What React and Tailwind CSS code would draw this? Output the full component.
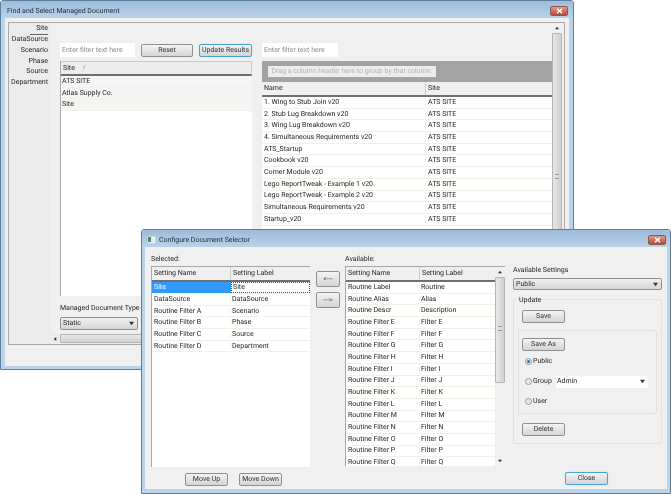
const docs = [
  '1. Wing to Stub Join v20',
  '2. Stub Lug Breakdown v20',
  '3. Wing Lug Breakdown v20',
  '4. Simultaneous Requirements v20',
  'ATS_Startup',
  'Cookbook v20',
  'Corner Module v20',
  'Lego ReportTweak - Example 1 v20',
  'Lego ReportTweak - Example 2 v20',
  'Simultaneous Requirements v20',
  'Startup_v20',
]

const tabs = ['Site', 'DataSource', 'Scenario', 'Phase', 'Source', 'Department']

const selected = [
  ['DataSource', 'DataSource'],
  ['Routine Filter A', 'Scenario'],
  ['Routine Filter B', 'Phase'],
  ['Routine Filter C', 'Source'],
  ['Routine Filter D', 'Department'],
]

const available = [
  ['Routine Label', 'Routine'],
  ['Routine Alias', 'Alias'],
  ['Routine Descr', 'Description'],
  ['Routine Filter E', 'Filter E'],
  ['Routine Filter F', 'Filter F'],
  ['Routine Filter G', 'Filter G'],
  ['Routine Filter H', 'Filter H'],
  ['Routine Filter I', 'Filter I'],
  ['Routine Filter J', 'Filter J'],
  ['Routine Filter K', 'Filter K'],
  ['Routine Filter L', 'Filter L'],
  ['Routine Filter M', 'Filter M'],
  ['Routine Filter N', 'Filter N'],
  ['Routine Filter O', 'Filter O'],
  ['Routine Filter P', 'Filter P'],
  ['Routine Filter Q', 'Filter Q'],
]

const Button = ({ children, className = '', focused }) => (
  <div
    className={`flex items-center justify-center whitespace-nowrap rounded-[2px] border bg-gradient-to-b from-[#f4f4f4] to-[#d4d4d4] text-[#333] ${
      focused ? 'border-[#4aa3d8] shadow-[0_0_1px_#7cc4ea]' : 'border-[#8f8f8f]'
    } ${className}`}
  >
    {children}
  </div>
)

const Arrow = ({ dir = 'down', size = 5, color = '#333' }) => {
  const pts = {
    down: '0,1 6,1 3,5',
    up: '0,5 6,5 3,1',
    left: '5,0 5,6 1,3',
  }
  return (
    <svg width={size} height={size} viewBox="0 0 6 6" className="shrink-0">
      <polygon points={pts[dir]} fill={color} />
    </svg>
  )
}

const CloseBox = ({ className = '' }) => (
  <div className={`flex h-[10px] w-[18px] items-center justify-center rounded-[2px] border border-[#8c5a55] bg-gradient-to-b from-[#dd9a90] to-[#b8493c] ${className}`}>
    <svg width="7" height="6" viewBox="0 0 7 6">
      <path d="M1 0.8 L6 5.2 M6 0.8 L1 5.2" stroke="#fff" strokeWidth="1.5" />
    </svg>
  </div>
)

const Filter = ({ className = '' }) => (
  <div className={`flex h-[14px] items-center bg-white px-[2px] text-[#8d8d8d] ${className}`}>
    Enter filter text here
  </div>
)

const HeaderCell = ({ children, className = '' }) => (
  <div className={`flex h-full items-center border-r border-[#d0d0d0] pl-[2px] ${className}`}>{children}</div>
)

const PairRow = ({ name, label, nameWidth = 'w-[79px]' }) => (
  <div className="flex h-[11.7px] shrink-0 items-center border-b border-[#f2f1e8] bg-white">
    <div className={`shrink-0 truncate border-r border-[#f2f1e8] pl-[2px] ${nameWidth}`}>{name}</div>
    <div className="flex-1 pl-[1px]">{label}</div>
  </div>
)

const VScrollbar = ({ className = '', thumb = 'h-[100px]', grip = 'mt-[44px]' }) => (
  <div className={`flex flex-col items-center bg-[#f0f0f0] ${className}`}>
    <div className="flex h-[10px] shrink-0 items-center"><Arrow dir="up" size={4} /></div>
    <div className={`flex w-full shrink-0 justify-center rounded-[1px] border border-[#b5b5b5] bg-gradient-to-r from-[#e8e8e8] to-[#cfcfcf] ${thumb}`}>
      <div className={`h-[5px] w-[4px] border-y border-[#999] bg-[#ddd] ${grip}`} />
    </div>
    <div className="flex-1" />
    <div className="flex h-[10px] shrink-0 items-center"><Arrow dir="down" size={4} /></div>
  </div>
)

const Radio = ({ on }) => (
  <div className="flex h-[7px] w-[7px] shrink-0 items-center justify-center rounded-full border border-[#9a9a9a] bg-[#e8e8e8]">
    {on && <div className="h-[3px] w-[3px] rounded-full bg-[#1f6fb5]" />}
  </div>
)

const FindWindow = () => (
  <div className="absolute left-0 top-0 flex h-[370px] w-[574px] flex-col rounded-t-[3px] border border-[#5d7f97] bg-[#bcd4ea]">
    <div className="flex h-[17px] shrink-0 items-center justify-between bg-gradient-to-b from-[#9dbcd9] to-[#b9d2ea] pl-[6px] pr-[5px] pt-[3px]">
      <span className="text-[#1b2a38]">Find and Select Managed Document</span>
      <CloseBox />
    </div>
    <div className="mx-[4px] mb-[3px] flex flex-1 flex-col bg-[#f0f0f0] pb-[21px] pl-[3px] pr-[4px] pt-[4px]">
      <div className="flex flex-1 overflow-hidden border border-[#a8a8a8] bg-[#f0f0f0]">
        <div className="flex w-[42px] shrink-0 flex-col items-end bg-[#ececec] pr-[3px]">
          {tabs.map((t, i) => (
            <div key={t} className={`flex h-[10.6px] items-center whitespace-nowrap ${i === 0 ? 'mt-[1px] border-b border-[#666] pl-[6px]' : ''}`}>{t}</div>
          ))}
        </div>
        <div className="flex min-w-0 flex-1 flex-col">
          <div className="flex min-h-0 flex-1">
            <div className="flex w-[203px] shrink-0 flex-col pl-[9px] pt-[20px]">
              <div className="flex h-[14px] items-center">
                <Filter className="w-[75px]" />
                <Button className="ml-[6px] h-[13px] w-[52px]">Reset</Button>
                <Button focused className="ml-[6px] h-[13px] w-[53px]">Update Results</Button>
              </div>
              <div className="mt-[4px] flex w-[192px] flex-1 flex-col border-l border-[#a8a8a8] bg-white">
                <div className="flex h-[15px] items-center border-b-2 border-t border-r border-[#6f6f6f] border-t-[#c9c9c9] border-r-[#c9c9c9] bg-[#ededed] pl-[2px]">
                  Site <span className="ml-[8px] text-[6px] text-[#777]">/</span>
                </div>
                {['ATS SITE', 'Atlas Supply Co.', 'Site'].map((s) => (
                  <div key={s} className="flex h-[11.7px] items-center border-b border-[#f4f2e8] bg-[#f5f5f5] pl-[1px]">{s}</div>
                ))}
              </div>
              <div className="flex h-[37px] shrink-0 flex-col pt-[9px]">
                <div className="whitespace-nowrap">Managed Document Type</div>
                <div className="mt-[5px] flex h-[13px] w-[78px] items-center justify-between rounded-[2px] border border-[#8f8f8f] bg-gradient-to-b from-[#f0f0f0] to-[#d6d6d6] pl-[2px] pr-[3px]">
                  Static <Arrow />
                </div>
              </div>
            </div>
            <div className="flex min-w-0 flex-1 flex-col pl-[8px] pt-[20px]">
              <Filter className="w-[76px] shrink-0" />
              <div className="mt-[4px] flex-1 overflow-hidden bg-white">
                <div className="flex h-[21px] items-start bg-[#a3a3a3] pl-[6px] pt-[5px]">
                  <div className="flex h-[11px] w-[168px] items-center justify-center whitespace-nowrap bg-[#ededed] text-[#b5b5b5]">Drag a column header here to group by that column.</div>
                </div>
                <div className="flex h-[15px] border-b-2 border-[#6f6f6f] bg-[#f0f0f0]">
                  <HeaderCell className="w-[164px] shrink-0">Name</HeaderCell>
                  <div className="flex items-center pl-[2px]">Site</div>
                </div>
                {docs.map((d) => (
                  <div key={d} className="flex h-[11.7px] items-center border-b border-[#f2f1e8]">
                    <div className="w-[164px] shrink-0 border-r border-[#f2f1e8] pl-[2px]">{d}</div>
                    <div className="pl-[2px]">ATS SITE</div>
                  </div>
                ))}
              </div>
            </div>
            <VScrollbar className="mr-[2px] w-[10px] shrink-0" thumb="h-[270px]" grip="mt-[140px]" />
          </div>
          <div className="flex h-[11px] shrink-0 items-center bg-[#ececec] pl-[2px]">
            <Arrow dir="left" size={4} />
            <div className="ml-[3px] h-[9px] w-[400px] rounded-[1px] border border-[#b5b5b5] bg-gradient-to-b from-[#e8e8e8] to-[#cfcfcf]" />
          </div>
        </div>
      </div>
    </div>
  </div>
)

const ConfigHeader = ({ nameWidth = 'w-[79px]' }) => (
  <div className="flex h-[15px] shrink-0 border-b-2 border-[#6f6f6f] bg-[#efefef]">
    <HeaderCell className={`shrink-0 ${nameWidth}`}>Setting Name</HeaderCell>
    <div className="flex items-center pl-[2px]">Setting Label</div>
  </div>
)

const ConfigWindow = () => (
  <div className="absolute left-[141px] top-[229px] flex h-[265px] w-[530px] flex-col rounded-t-[3px] border border-[#5d7f97] bg-[#bcd4ea]">
    <div className="flex h-[17px] shrink-0 items-center bg-gradient-to-b from-[#9dbcd9] to-[#b9d2ea] pl-[5px] pr-[4px] pt-[3px]">
      <svg width="9" height="8" viewBox="0 0 9 8" className="mr-[3px]">
        <rect width="9" height="8" fill="#e8eef2" stroke="#7d8e9a" strokeWidth="0.5" />
        <rect x="1" y="1" width="3" height="5" fill="#3f8a6a" />
      </svg>
      <span className="text-[#1b2a38]">Configure Document Selector</span>
      <CloseBox className="ml-auto" />
    </div>
    <div className="mx-[3px] mb-[4px] flex min-h-0 flex-1 bg-[#f0f0f0] pb-[4px] pl-[6px] pr-[5px]">
      <div className="flex w-[159px] shrink-0 flex-col">
        <div className="flex h-[19px] shrink-0 items-end pb-[3px]">Selected:</div>
        <div className="flex h-[201px] shrink-0 flex-col border-l border-t border-[#a8a8a8] bg-white">
          <ConfigHeader />
          <div className="flex h-[12px] shrink-0 items-center border-b border-[#f2f1e8]">
            <div className="flex h-full w-[79px] shrink-0 items-center bg-[#3399ff] pl-[2px] text-white">Site</div>
            <div className="flex h-full flex-1 items-center border border-dotted border-[#555] pl-[1px]">Site</div>
          </div>
          {selected.map(([n, l]) => <PairRow key={n} name={n} label={l} />)}
        </div>
        <div className="mt-[6px] flex gap-[11px] pl-[34px]">
          <Button className="h-[13px] w-[43px]">Move Up</Button>
          <Button className="h-[13px] w-[43px]">Move Down</Button>
        </div>
      </div>
      <div className="ml-[6px] flex w-[24px] shrink-0 flex-col gap-[5px] pt-[24px]">
        <Button className="h-[16px] w-[24px]">&lt;---</Button>
        <Button className="h-[16px] w-[24px]">---&gt;</Button>
      </div>
      <div className="ml-[5px] flex w-[160px] shrink-0 flex-col">
        <div className="flex h-[19px] shrink-0 items-end pb-[3px]">Available:</div>
        <div className="flex h-[200px] shrink-0 overflow-hidden border-l border-t border-[#a8a8a8] bg-white">
          <div className="min-w-0 flex-1">
            <ConfigHeader nameWidth="w-[74px]" />
            {available.map(([n, l]) => <PairRow key={n} name={n} label={l} nameWidth="w-[74px]" />)}
          </div>
          <VScrollbar className="w-[10px] shrink-0" thumb="h-[106px]" grip="mt-[48px]" />
        </div>
      </div>
      <div className="ml-[8px] flex min-w-0 flex-1 flex-col">
        <div className="mt-[19px] h-[9px] leading-[9px]">Available Settings</div>
        <div className="mt-[3px] flex h-[12px] items-center justify-between rounded-[2px] border border-[#8f8f8f] bg-gradient-to-b from-[#f0f0f0] to-[#d6d6d6] pl-[2px] pr-[3px]">
          Public <Arrow />
        </div>
        <div className="mt-[9px] flex h-[145px] flex-col rounded-[2px] border border-[#e2e2e2] px-[4px]">
          <div className="-mt-[3px] h-[13px] pl-[1px] leading-[6px]">Update</div>
          <Button className="ml-[4px] h-[13px] w-[43px]">Save</Button>
          <div className="mt-[7px] flex h-[84px] flex-col rounded-[2px] border border-[#e2e2e2] pl-[3px] pt-[7px]">
            <Button className="h-[13px] w-[43px]">Save As</Button>
            <div className="mt-[6px] flex h-[9px] items-center gap-[1px] pl-[3px]"><Radio on /> Public</div>
            <div className="mt-[9px] flex h-[13px] items-center gap-[1px] pl-[3px]">
              <Radio />
              <span className="w-[22px]">Group</span>
              <div className="flex h-[12px] w-[92px] items-center justify-between bg-white pl-[1px] pr-[3px]">Admin <Arrow /></div>
            </div>
            <div className="mt-[9px] flex h-[9px] items-center gap-[1px] pl-[3px]"><Radio /> User</div>
          </div>
          <Button className="ml-[4px] mt-[9px] h-[13px] w-[43px]">Delete</Button>
        </div>
        <Button focused className="ml-[52px] mt-auto h-[13px] w-[43px]">Close</Button>
      </div>
    </div>
  </div>
)

export default function App() {
  return (
    <div className="relative h-[494px] w-[671px] overflow-hidden bg-white font-['Roboto',sans-serif] text-[7px] leading-none text-[#262626] blur-[0.3px] [text-rendering:geometricPrecision]">
      <FindWindow />
      <ConfigWindow />
    </div>
  )
}
